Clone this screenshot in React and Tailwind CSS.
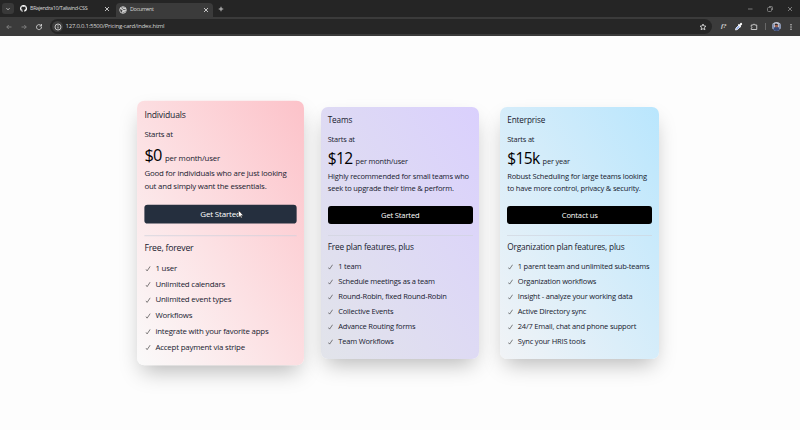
import React from 'react';

const plans = [
  {
    name: 'Individuals', price: '$0', unit: 'per month/user',
    desc: ['Good for individuals who are just looking', 'out and simply want the essentials.'],
    action: 'Get Started', heading: 'Free, forever',
    items: ['1 user', 'Unlimited calendars', 'Unlimited event types', 'Workflows', 'integrate with your favorite apps', 'Accept payment via stripe'],
    card: 'scale-105 from-[#fafafa] to-[#fcc2c9]', button: 'bg-[#252f3e]',
  },
  {
    name: 'Teams', price: '$12', unit: 'per month/user',
    desc: ['Highly recommended for small teams who', 'seek to upgrade their time & perform.'],
    action: 'Get Started', heading: 'Free plan features, plus',
    items: ['1 team', 'Schedule meetings as a team', 'Round-Robin, fixed Round-Robin', 'Collective Events', 'Advance Routing forms', 'Team Workflows'],
    card: 'from-[#e2e4ea] to-[#dad0fd]', button: 'bg-black',
  },
  {
    name: 'Enterprise', price: '$15k', unit: 'per year',
    desc: ['Robust Scheduling for large teams looking', 'to have more control, privacy & security.'],
    action: 'Contact us', heading: 'Organization plan features, plus',
    items: ['1 parent team and unlimited sub-teams', 'Organization workflows', 'Insight - analyze your working data', 'Active Directory sync', '24/7 Email, chat and phone support', 'Sync your HRIS tools'],
    card: 'from-[#f1f3f6] to-[#b9e6fd]', button: 'bg-black',
  },
];

function Check() {
  return (
    <svg className="mr-[5px] ml-[0.5px] h-[6px] w-[5px] shrink-0" viewBox="0 0 5 6" fill="none" stroke="#333" strokeWidth=".6">
      <path d="M.3 3.5 1.6 5.1 4.6.7" />
    </svg>
  );
}

function PlanCard({ plan }) {
  return (
    <section className={`h-[252px] w-[158.5px] rounded-[7px] bg-linear-to-tr pr-[6.5px] pl-[7px] pt-[5.5px] shadow-[0_10px_21px_-5px_rgba(0,0,0,0.28)] ${plan.card}`}>
      <h2 className="text-[8.2px] leading-[13px] tracking-[-0.15px]">{plan.name}</h2>
      <p className="mt-[7.5px] text-[7.4px] leading-[12px] tracking-[-0.18px]">Starts at</p>
      <p className="mt-px flex h-[24px] items-baseline leading-[24px]">
        <span className="text-[15.6px] tracking-[-0.7px] text-black">{plan.price}</span>
        <span className="ml-[3.2px] text-[7.4px] tracking-[-0.16px]">{plan.unit}</span>
      </p>
      <p className="-mt-[0.5px] text-[7.5px] leading-[12px] tracking-[-0.18px] whitespace-nowrap">
        {plan.desc[0]}<br />{plan.desc[1]}
      </p>
      <button className={`mt-[12px] block h-[18.5px] w-full rounded-[3px] text-[7.6px] leading-[18px] tracking-[-0.17px] text-white ${plan.button}`}>{plan.action}</button>
      <hr className="mt-[10.5px] border-t border-[#cfd2dc]/60" />
      <h3 className="mt-[5px] text-[8.3px] leading-[12px] tracking-[-0.2px] whitespace-nowrap">{plan.heading}</h3>
      <ul className="mt-[6.5px] text-[7.5px] leading-[15px] tracking-[-0.19px] whitespace-nowrap">
        {plan.items.map((item) => (
          <li key={item} className="flex h-[15px] items-center"><Check />{item}</li>
        ))}
      </ul>
    </section>
  );
}

function Stroke({ d, className = '', children }) {
  return (
    <svg className={`h-[8px] w-[8px] shrink-0 ${className}`} viewBox="0 0 16 16" fill="none" stroke="currentColor" strokeWidth="1.8">
      {d && <path d={d} />}{children}
    </svg>
  );
}

const close = 'M4 4 12 12M12 4 4 12';

function Browser() {
  return (
    <header className="h-[36px] bg-[#3b3b3b] text-[#d4d4d4]">
      <div className="flex h-[17px] items-center bg-[#252525] text-[5.5px]">
        <span className="ml-[2px] flex h-[11px] w-[12px] items-center justify-center rounded-[3px] bg-[#393939]">
          <Stroke d="m5 6.5 3 3 3-3" className="h-[7px] w-[7px]" />
        </span>
        <svg className="ml-[6px] h-[7px] w-[7px]" viewBox="0 0 16 16" fill="white">
          <path d="M8 0C3.58 0 0 3.58 0 8c0 3.54 2.29 6.53 5.47 7.59.4.07.55-.17.55-.38v-1.49c-2.01.37-2.53-.49-2.69-.94-.09-.23-.48-.94-.82-1.13-.28-.15-.68-.52-.01-.53.63-.01 1.08.58 1.23.82.72 1.21 1.87.87 2.33.66.07-.52.28-.87.51-1.07-1.78-.2-3.64-.89-3.64-3.95 0-.87.31-1.59.82-2.15-.08-.2-.36-1.02.08-2.12 0 0 .67-.21 2.2.82a7.6 7.6 0 0 1 4 0c1.53-1.04 2.2-.82 2.2-.82.44 1.1.16 1.92.08 2.12.51.56.82 1.27.82 2.15 0 3.07-1.87 3.75-3.65 3.95.29.25.54.73.54 1.48v2.2c0 .21.15.46.55.38A8 8 0 0 0 8 0Z" />
        </svg>
        <span className="ml-[3px] w-[73px] tracking-[-0.42px] whitespace-nowrap">BRajendra10/Tailwind-CSS</span>
        <Stroke d={close} className="h-[6px] w-[6px]" />
        <div className="ml-[5px] flex h-[14px] w-[97px] shrink-0 items-center self-end rounded-t-[4px] bg-[#3b3b3b] pb-px pl-[3px]">
          <Stroke className="h-[6.5px] w-[6.5px]"><circle cx="8" cy="8" r="6.6" /><path d="M2 5c3-1 4 3 6 3s0 3-2 5M8 2c-1 3 3 3 6 3M14 9c-3-1-4 1-4 4" strokeWidth="2.5" /></Stroke>
          <span className="ml-[3px] w-[71.5px] shrink-0 tracking-[-0.42px]">Document</span>
          <Stroke d={close} className="h-[6px] w-[6px]" />
        </div>
        <Stroke d="M8 3.5v9M3.5 8h9" className="ml-[4px]" />
        <div className="mr-[6px] ml-auto flex gap-[12px] text-[#858585]">
          <Stroke d="M4 8h9" className="h-[7px] w-[7px]" />
          <Stroke className="h-[7px] w-[7px]"><rect x="3" y="5" width="8" height="8" rx="2" /><path d="M6 3h5q2 0 2 2v5" /></Stroke>
          <Stroke d={close} className="h-[7px] w-[7px]" />
        </div>
      </div>
      <div className="flex h-[19px] items-center">
        <Stroke d="M13 8H3.5M7.5 4l-4 4 4 4" className="ml-[5px] text-[#858585]" />
        <Stroke d="M3 8h9.5M8.5 4l4 4-4 4" className="ml-[7px] text-[#858585]" />
        <Stroke d="M13 8A5 5 0 1 1 11 4.2L13 6M13 2v4H9" className="ml-[7px]" />
        <div className="ml-[7px] flex h-[15px] w-[662px] items-center rounded-full bg-[#262626] pr-[5.5px] pl-[2px]">
          <span className="flex h-[11px] w-[11px] items-center justify-center rounded-full bg-[#3d3d3d]">
            <Stroke className="h-[7px] w-[7px]"><circle cx="8" cy="8" r="6" /><path d="M8 7v4M8 4v1.5" /></Stroke>
          </span>
          <span className="ml-[2.5px] text-[6px] tracking-[-0.24px]">127.0.0.1:5500/Pricing-card/index.html</span>
          <Stroke d="m8 2 1.8 4 4.2.4-3.2 2.8 1 4.3L8 11.3l-3.8 2.2 1-4.3L2 6.4 6.2 6Z" className="ml-auto" />
        </div>
        <span className="ml-[9px] w-[7px] font-['Liberation_Serif',serif] text-[7px] font-bold tracking-[-0.3px] italic">f?</span>
        <svg className="ml-[6px] h-[9px] w-[9px]" viewBox="0 0 18 18">
          <path d="m3 15 1-3 6-6 3 3-6 6-4 1Z" fill="#9ab4ef" stroke="white" strokeWidth="1.5" />
          <path d="m9 4 2 1 2-3q2-1 3 1t-1 3l-2 2 1 2-1 1-5-5Z" fill="white" />
        </svg>
        <Stroke d="M2.5 4h4V3q1.5-2 3 0v1h4v9h-11V10q3-1.5 0-3Z" className="ml-[7px]" />
        <span className="ml-[6.5px] h-[7px] w-px bg-[#686868]" />
        <svg className="ml-[6px] h-[9px] w-[9px] rounded-full" viewBox="0 0 9 9">
          <path d="M0 0h9v9H0Z" fill="#bfc3d2" /><path d="M0 9V7l3-2h3l3 2v2Z" fill="#384a78" />
          <path d="M0 2h2v5H0ZM7 2h2v5H7Z" fill="#8290b0" />
          <circle cx="4.5" cy="3.7" r="1.7" fill="#9a5e4d" /><path d="M2.6 3Q3 0 6.4 2.9Z" fill="#30282c" />
        </svg>
        <svg className="ml-[6.5px] h-[8px] w-[8px]" viewBox="0 0 8 8" fill="#dedede">
          <circle cx="4" cy="1.8" r=".7" /><circle cx="4" cy="4" r=".7" /><circle cx="4" cy="6.2" r=".7" />
        </svg>
      </div>
    </header>
  );
}

export default function App() {
  return (
    <div className="relative h-[430px] w-[800px] overflow-hidden bg-[#fdfdfd] font-['Open_Sans','Noto_Sans',sans-serif] text-[#17202e]">
      <Browser />
      <main className="flex justify-center gap-[21px] pt-[71px]">
        {plans.map((plan) => <PlanCard key={plan.name} plan={plan} />)}
      </main>
      <svg className="absolute top-[210px] left-[238px] h-[9px] w-[6px]" viewBox="0 0 6 9">
        <path d="M.5.5v6.8l1.6-1.5 1 2.3 1.1-.5-1-2.2h2.2Z" fill="white" stroke="#222" strokeWidth=".5" />
      </svg>
    </div>
  );
}
